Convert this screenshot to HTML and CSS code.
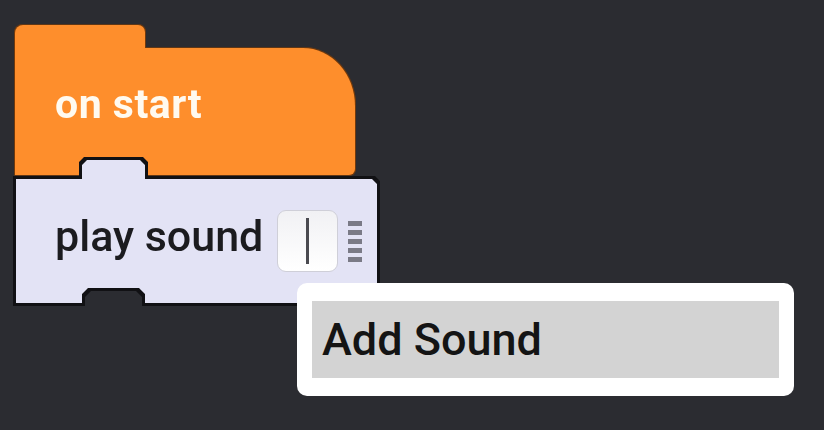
FILE: index.html
```html
<!DOCTYPE html>
<html lang="en">

<head>
    <meta charset="UTF-8">
    <meta name="viewport" content="width=device-width, initial-scale=1.0">
    <title>Blocks</title>
    <link rel="stylesheet" href="styles.css">
</head>

<body>
    <div class="workspace">
        <div class="hat">
            <div class="hat-tab"></div>
            <div class="hat-body">
                <span class="hat-label">on start</span>
            </div>
        </div>

        <div class="cmd-wrap">
            <div class="cmd">
                <div class="cmd-row">
                    <span class="cmd-label">play sound</span>
                    <div class="field">
                        <div class="caret"></div>
                    </div>
                    <div class="handle">
                        <span></span>
                        <span></span>
                        <span></span>
                        <span></span>
                        <span></span>
                    </div>
                </div>
            </div>
        </div>

        <div class="menu">
            <div class="menu-item">Add Sound</div>
        </div>
    </div>
</body>

</html>
```

FILE: styles.css
```css
html,
body {
    margin: 0;
    height: 100%;
    overflow: hidden;
}

body {
    background-color: #2b2c31;
    font-family: Roboto, "Liberation Sans", sans-serif;
}

.workspace {
    position: relative;
    height: 100%;
    box-sizing: border-box;
    padding: 25px 0 0 15px;
}

/* orange hat block */
.hat {
    width: 340px;
    filter: drop-shadow(1px 0 0 rgba(120, 60, 10, 0.7)) drop-shadow(-1px 0 0 rgba(120, 60, 10, 0.7)) drop-shadow(0 1px 0 rgba(120, 60, 10, 0.7)) drop-shadow(0 -1px 0 rgba(120, 60, 10, 0.7));
}

.hat-tab {
    width: 130px;
    height: 23px;
    background-color: #fe8e2c;
    border-radius: 8px 7px 0 0;
}

.hat-body {
    height: 127px;
    box-sizing: border-box;
    padding: 0 0 8px 40px;
    display: flex;
    align-items: center;
    background-color: #fe8e2c;
    border-radius: 0 52px 6px 0 / 0 58px 6px 0;
}

.hat-label {
    margin-bottom: 7px;
    color: #fffaf0;
    font-size: 41px;
    font-weight: 700;
    letter-spacing: 0.5px;
}

/* lavender command block */
.cmd-wrap {
    width: 361px;
    margin: -15px 0 0 1px;
    filter: drop-shadow(3px 0 0 #111114) drop-shadow(-3px 0 0 #111114) drop-shadow(0 3px 0 #111114) drop-shadow(0 -3px 0 #111114);
}

.cmd {
    height: 143px;
    box-sizing: border-box;
    padding: 19px 0 0 39px;
    background-color: #e3e3f5;
    clip-path: polygon(0 19px, 66px 19px, 66px 5px, 71px 0, 124px 0, 129px 5px, 129px 19px, 356px 19px, 361px 24px, 361px 143px, 129px 143px, 129px 134px, 123px 128px, 72px 128px, 66px 134px, 66px 143px, 0 143px);
}

.cmd-row {
    height: 124px;
    display: flex;
    align-items: center;
}

.cmd-label {
    margin-bottom: 10px;
    color: #1b1b1f;
    font-size: 43px;
    font-weight: 500;
}

.field {
    width: 61px;
    height: 62px;
    margin-left: 14px;
    box-sizing: border-box;
    border: 1px solid #cfcfd8;
    border-radius: 9px;
    background: linear-gradient(#f1f1f4, #ffffff);
    display: flex;
    align-items: center;
    justify-content: center;
}

.caret {
    width: 3px;
    height: 46px;
    background-color: #4a4a50;
}

.handle {
    margin-left: 10px;
    display: flex;
    flex-direction: column;
    gap: 4px;
}

.handle span {
    width: 14px;
    height: 5px;
    background-color: #7a7a86;
}

/* dropdown menu */
.menu {
    position: absolute;
    left: 297px;
    top: 283px;
    width: 497px;
    height: 113px;
    box-sizing: border-box;
    padding: 18px 15px;
    background-color: #ffffff;
    border-radius: 10px;
}

.menu-item {
    height: 77px;
    box-sizing: border-box;
    padding-left: 10px;
    display: flex;
    align-items: center;
    background-color: #d3d3d3;
    color: #141414;
    font-size: 45px;
    font-weight: 500;
}
```
